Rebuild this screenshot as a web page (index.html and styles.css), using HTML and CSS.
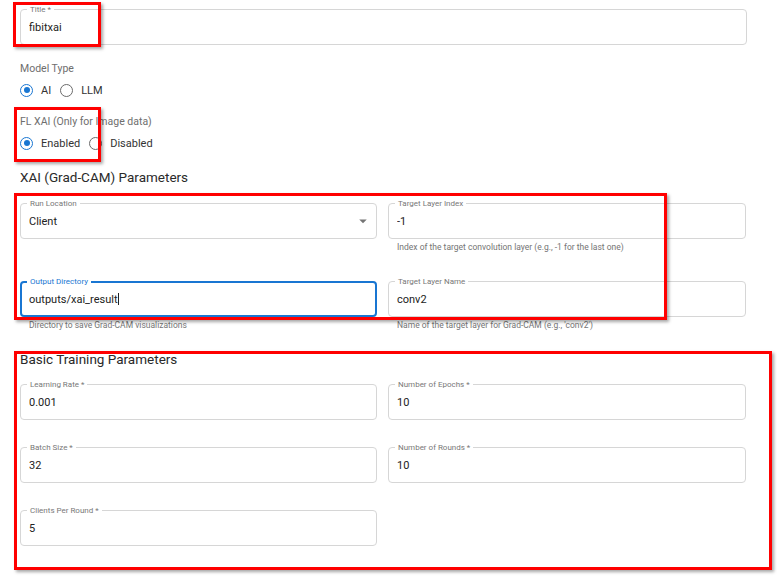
FILE: index.html
```html
<!DOCTYPE html>
<html lang="en">
  <head>
    <meta charset="UTF-8">
    <title>Federated Learning Job</title>
    <link rel="stylesheet" href="styles.css">
  </head>
  <body>
    <div class="page">
      <div class="field title-field">
        <label class="legend">Title *</label>
        <input type="text" value="fibitxai">
      </div>

      <div class="group-label model-label">Model Type</div>
      <div class="radios">
        <label class="radio"><input type="radio" name="model" checked><span>AI</span></label>
        <label class="radio"><input type="radio" name="model"><span>LLM</span></label>
      </div>

      <div class="group-label xai-label">FL XAI (Only for Image data)</div>
      <div class="radios">
        <label class="radio"><input type="radio" name="xai" checked><span>Enabled</span></label>
        <label class="radio"><input type="radio" name="xai"><span>Disabled</span></label>
      </div>

      <h3 class="section xai-section">XAI (Grad-CAM) Parameters</h3>
      <div class="grid xai-grid">
        <div class="cell">
          <div class="field select">
            <label class="legend">Run Location</label>
            <div class="value">Client</div>
            <svg class="arrow" viewBox="0 0 24 24" width="18" height="18"><path d="M7 10l5 5 5-5z" fill="#757575"/></svg>
          </div>
        </div>
        <div class="cell">
          <div class="field">
            <label class="legend">Target Layer Index</label>
            <input type="text" value="-1">
          </div>
          <div class="helper">Index of the target convolution layer (e.g., -1 for the last one)</div>
        </div>
        <div class="cell">
          <div class="field focused">
            <label class="legend">Output Directory</label>
            <div class="value">outputs/xai_result<span class="caret"></span></div>
          </div>
          <div class="helper">Directory to save Grad-CAM visualizations</div>
        </div>
        <div class="cell">
          <div class="field">
            <label class="legend">Target Layer Name</label>
            <input type="text" value="conv2">
          </div>
          <div class="helper">Name of the target layer for Grad-CAM (e.g., 'conv2')</div>
        </div>
      </div>

      <h3 class="section train-section">Basic Training Parameters</h3>
      <div class="grid train-grid">
        <div class="field">
          <label class="legend">Learning Rate *</label>
          <input type="text" value="0.001">
        </div>
        <div class="field">
          <label class="legend">Number of Epochs *</label>
          <input type="text" value="10">
        </div>
        <div class="field">
          <label class="legend">Batch Size *</label>
          <input type="text" value="32">
        </div>
        <div class="field">
          <label class="legend">Number of Rounds *</label>
          <input type="text" value="10">
        </div>
        <div class="field">
          <label class="legend">Clients Per Round *</label>
          <input type="text" value="5">
        </div>
      </div>
    </div>

    <div class="mark mark-title"></div>
    <div class="mark mark-xai"></div>
    <div class="mark mark-grad"></div>
    <div class="mark mark-train"></div>
  </body>
</html>
```

FILE: styles.css
```css
body {
  margin: 0;
  background: #fff;
  font-family: Roboto, "Liberation Sans", Arial, sans-serif;
  color: #222;
}

.page {
  width: 727px;
  padding: 9px 0 0 20px;
}

.field {
  position: relative;
  height: 36px;
  box-sizing: border-box;
  border: 1px solid #d6d6d6;
  border-radius: 4px;
  display: flex;
  align-items: center;
}

.field input,
.field .value {
  border: 0;
  outline: none;
  background: transparent;
  font-family: inherit;
  font-size: 11px;
  color: #222;
  padding: 0 0 0 8px;
  width: 100%;
  margin: 0;
}

.legend {
  position: absolute;
  top: -6px;
  left: 6px;
  padding: 0 3px;
  background: #fff;
  font-size: 8px;
  line-height: 11px;
  color: #787878;
}

.focused {
  border: 2px solid #1976d2;
}

.focused .value {
  padding-left: 7px;
}

.focused .legend {
  color: #1976d2;
  left: 5px;
  top: -7px;
}

.caret {
  display: inline-block;
  width: 1px;
  height: 12px;
  background: #222;
  vertical-align: -2px;
}

.select .arrow {
  position: absolute;
  right: 4px;
  top: 8px;
}

.group-label {
  font-size: 10.5px;
  line-height: 14px;
  color: #6e6e6e;
}

.model-label {
  margin-top: 17px;
}

.xai-label {
  margin-top: 15px;
}

.radios {
  display: flex;
  gap: 9px;
  height: 20px;
  margin-top: 4px;
  align-items: center;
}

.radio {
  display: flex;
  align-items: center;
  gap: 8px;
  font-size: 11px;
  color: #333;
}

.radio input {
  appearance: none;
  margin: 0;
  width: 13px;
  height: 13px;
  border: 1.5px solid #6b6b6b;
  border-radius: 50%;
  box-sizing: border-box;
  display: grid;
  place-items: center;
}

.radio input:checked {
  border-color: #1976d2;
}

.radio input:checked::after {
  content: "";
  width: 6px;
  height: 6px;
  border-radius: 50%;
  background: #1976d2;
}

.section {
  margin: 0;
  font-size: 13.5px;
  font-weight: normal;
  line-height: 18px;
  color: #2a2a2a;
}

.xai-section {
  margin-top: 15px;
}

.train-section {
  margin-top: 20px;
}

.grid {
  display: grid;
  grid-template-columns: 357px 358px;
  column-gap: 11px;
}

.xai-grid {
  margin-top: 17px;
  row-gap: 29px;
}

.cell {
  height: 49px;
}

.cell:nth-child(n+3) {
  height: auto;
}

.helper {
  margin-top: 3px;
  padding-left: 9px;
  font-size: 8.5px;
  line-height: 10px;
  color: #757575;
}

.train-grid {
  margin-top: 16px;
  row-gap: 27px;
}

.mark {
  position: absolute;
  border: 3px solid #ff0000;
  box-sizing: border-box;
  box-shadow: 2px 2px 3px rgba(0, 0, 0, 0.35);
}

.mark-title {
  left: 13px;
  top: 2px;
  width: 88px;
  height: 45px;
}

.mark-xai {
  left: 14px;
  top: 107px;
  width: 87px;
  height: 55px;
}

.mark-grad {
  left: 14px;
  top: 193px;
  width: 653px;
  height: 127px;
}

.mark-train {
  left: 14px;
  top: 351px;
  width: 758px;
  height: 219px;
}
```
